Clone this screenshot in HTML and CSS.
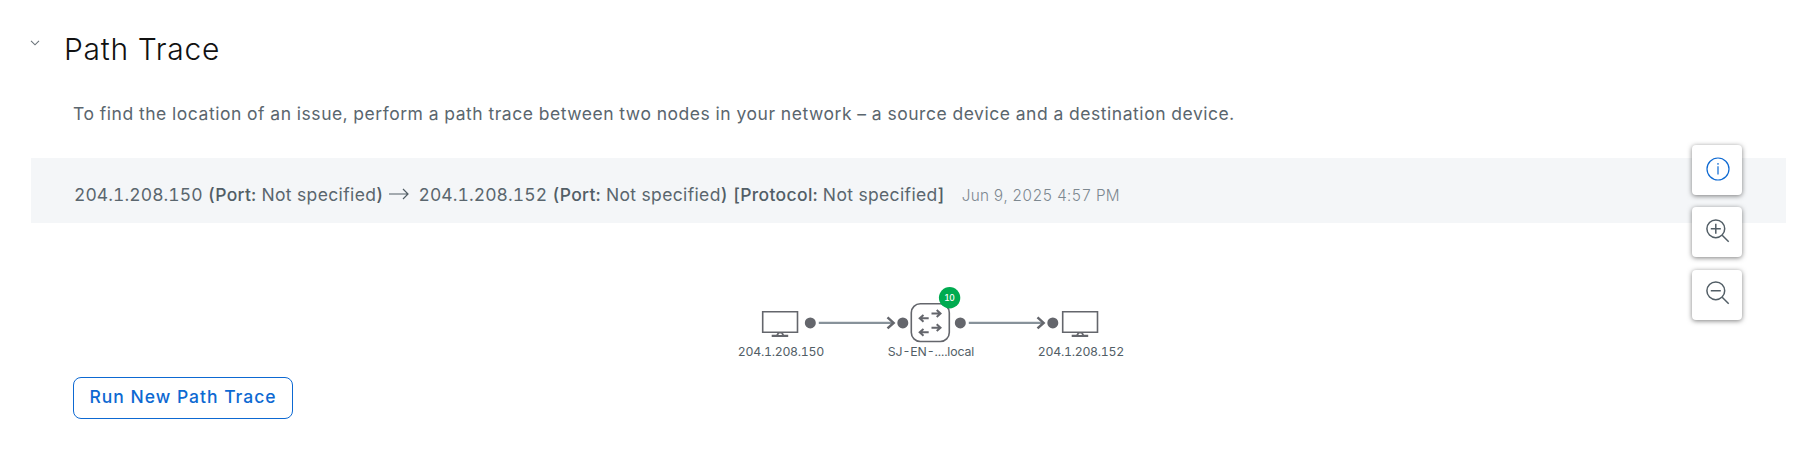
FILE: index.html
```html
<!DOCTYPE html>
<html lang="en">
<head>
<meta charset="utf-8">
<title>Path Trace</title>
<link rel="stylesheet" href="styles.css">
</head>
<body>
<main class="panel">
  <header class="heading">
    <svg class="chevron" width="10" height="6" viewBox="0 0 10 6"><path d="M1 .8l4 4 4-4"/></svg>
    <h1 class="title">Path Trace</h1>
  </header>
  <p class="intro">To find the location of an issue, perform a path trace between two nodes in your network – a source device and a destination device.</p>
  <section class="summary">
    <span class="ip">204.1.208.150</span>
    <span class="port"><b>(Port:</b> Not specified<b>)</b></span>
    <svg class="arrow" width="20" height="12" viewBox="0 0 20 12"><path d="M0 6h19M14 1l5 5-5 5"/></svg>
    <span class="ip">204.1.208.152</span>
    <span class="port"><b>(Port:</b> Not specified<b>)</b></span>
    <span class="protocol"><b>[Protocol:</b> Not specified<b>]</b></span>
    <time class="date">Jun 9, 2025 4:57 PM</time>
  </section>
  <svg class="topology" width="400" height="90" viewBox="730 280 400 90">
    <defs>
      <g id="monitor">
        <path class="stroke" d="M.7.7h34.8v20.6H.7z"/>
        <path class="fill" d="M15.8 21.5h5l1.2 2.2h4.2v2.2H9.7v-2.2h4.6z"/>
        <path class="gap" d="M17.2 22.4h2l.9 1.5h-3.8z"/>
      </g>
      <g id="link">
        <circle class="fill" cx="0" cy="0" r="5.5"/>
        <path class="line" d="M8.5 0H83"/>
        <path class="head" d="M77.2-5.5L83.3 0l-6.1 5.5"/>
        <circle class="fill" cx="92.5" cy="0" r="5.5"/>
      </g>
      <path id="right" d="M0 0h9M5.2-3.4L9 0 5.2 3.4"/>
      <path id="left" d="M9.5 0H.5M4.3-3.4L.5 0l3.8 3.4"/>
    </defs>
    <use href="#monitor" x="762" y="311"/>
    <use href="#link" x="810.3" y="322.9"/>
    <rect class="stroke" x="911.3" y="303.7" width="38" height="37.8" rx="9"/>
    <g class="swap">
      <use href="#right" x="931.5" y="313.5"/>
      <use href="#left" x="919.2" y="318.3"/>
      <use href="#right" x="931.5" y="327.7"/>
      <use href="#left" x="919.2" y="332.3"/>
    </g>
    <use href="#link" x="960.3" y="322.9"/>
    <use href="#monitor" x="1062" y="311"/>
    <circle class="badge" cx="949.6" cy="297.7" r="10.7"/>
    <text class="count" x="949.6" y="300.6" textLength="10.5">10</text>
    <text class="label" x="781" y="356" textLength="86.5">204.1.208.150</text>
    <text class="label" x="931" y="356" textLength="86.5">SJ-EN-....local</text>
    <text class="label" x="1081" y="356" textLength="86.5">204.1.208.152</text>
  </svg>
  <button class="run" type="button">Run New Path Trace</button>
  <aside class="tools">
    <button class="tool info" type="button" aria-label="Information"><svg width="24" height="24" viewBox="0 0 24 24"><circle cx="12" cy="12" r="11"/><path d="M12 9.3v8.2M12 6v1.7"/></svg></button>
    <button class="tool" type="button" aria-label="Zoom in"><svg width="24" height="24" viewBox="0 0 24 24"><circle cx="9.8" cy="9.8" r="8.9"/><path d="M16.2 16.2l6.5 6.5M4.8 9.8h10M9.8 4.8v10"/></svg></button>
    <button class="tool out" type="button" aria-label="Zoom out"><svg width="24" height="24" viewBox="0 0 24 24"><circle cx="9.8" cy="9.8" r="8.9"/><path d="M16.2 16.2l6.5 6.5M4.8 9.8h10"/></svg></button>
  </aside>
</main>
</body>
</html>
```
FILE: styles.css
```css
* { box-sizing: border-box; }
body {
  margin: 0;
  background: #fff;
  color: #5a666e;
  font-family: Inter, "Open Sans", sans-serif;
  font-weight: 400;
  font-variant-numeric: tabular-nums;
}
svg { display: block; fill: none; }
.panel {
  position: relative;
  height: 455px;
  padding: 29px 10px 0 31px;
  display: flex;
  flex-direction: column;
}
.heading { display: flex; height: 40px; }
.chevron { margin: 11px 0 0 -1px; stroke: #6b747a; stroke-width: 1.1; }
.title {
  margin: 0 0 0 24px;
  font-size: 30px;
  line-height: 40px;
  font-weight: 300;
  letter-spacing: .73px;
  color: #111;
  white-space: nowrap;
}
.intro {
  margin: 31px 0 0 42px;
  font-size: 17.5px;
  line-height: 28px;
  letter-spacing: .537px;
  white-space: nowrap;
}
.summary {
  margin-top: 30px;
  height: 65px;
  padding: 9px 0 0 43px;
  display: flex;
  align-items: center;
  background: #f4f6f8;
  font-size: 17.5px;
  line-height: 24px;
  white-space: nowrap;
}
.summary b { font-weight: 500; color: #525e66; }
.ip { width: 129px; letter-spacing: .08px; }
.port, .protocol { margin-left: 5px; letter-spacing: .36px; }
.arrow { margin: -3px 9px 0 6px; stroke: #525e66; stroke-width: 1.2; }
.date { margin: 2px 0 0 17px; font-size: 15.3px; font-weight: 300; letter-spacing: .21px; color: #7d8890; }
.topology { margin: 57px 0 0 699px; }
.stroke { stroke: #64666c; stroke-width: 1.6; }
.fill { fill: #64666c; }
.gap { fill: #fff; }
.line { stroke: #87929a; stroke-width: 2.3; }
.head { stroke: #64666c; stroke-width: 2.5; }
.swap { stroke: #64666c; stroke-width: 2; }
.badge { fill: #00ab50; }
.count { fill: #fff; font-size: 8.5px; font-weight: 500; text-anchor: middle; }
.label { fill: #525e66; font-size: 12.3px; font-weight: 400; text-anchor: middle; }
.run {
  margin: 7px 0 0 42px;
  width: 220px;
  height: 42px;
  padding: 0 0 2px;
  border: 1px solid #0d69d2;
  border-radius: 8px;
  background: #fff;
  color: #0d69d2;
  font: 500 17.5px/24px Inter, sans-serif;
  letter-spacing: 1px;
  white-space: nowrap;
}
.tools {
  position: absolute;
  top: 145px;
  left: 1692px;
  display: grid;
  grid-template-rows: 62px 63px 50px;
}
.tool {
  width: 50px;
  height: 50px;
  padding: 0 0 2px 1px;
  display: grid;
  place-items: center;
  border: 0;
  border-radius: 4px;
  background: #fff;
  box-shadow: 0 1px 5px rgba(0, 0, 0, .5);
}
.tool svg { stroke: #525e66; stroke-width: 1.5; }
.tool.out { padding-bottom: 4px; }
.info svg { stroke: #0d69d2; stroke-width: 1.2; }
```
